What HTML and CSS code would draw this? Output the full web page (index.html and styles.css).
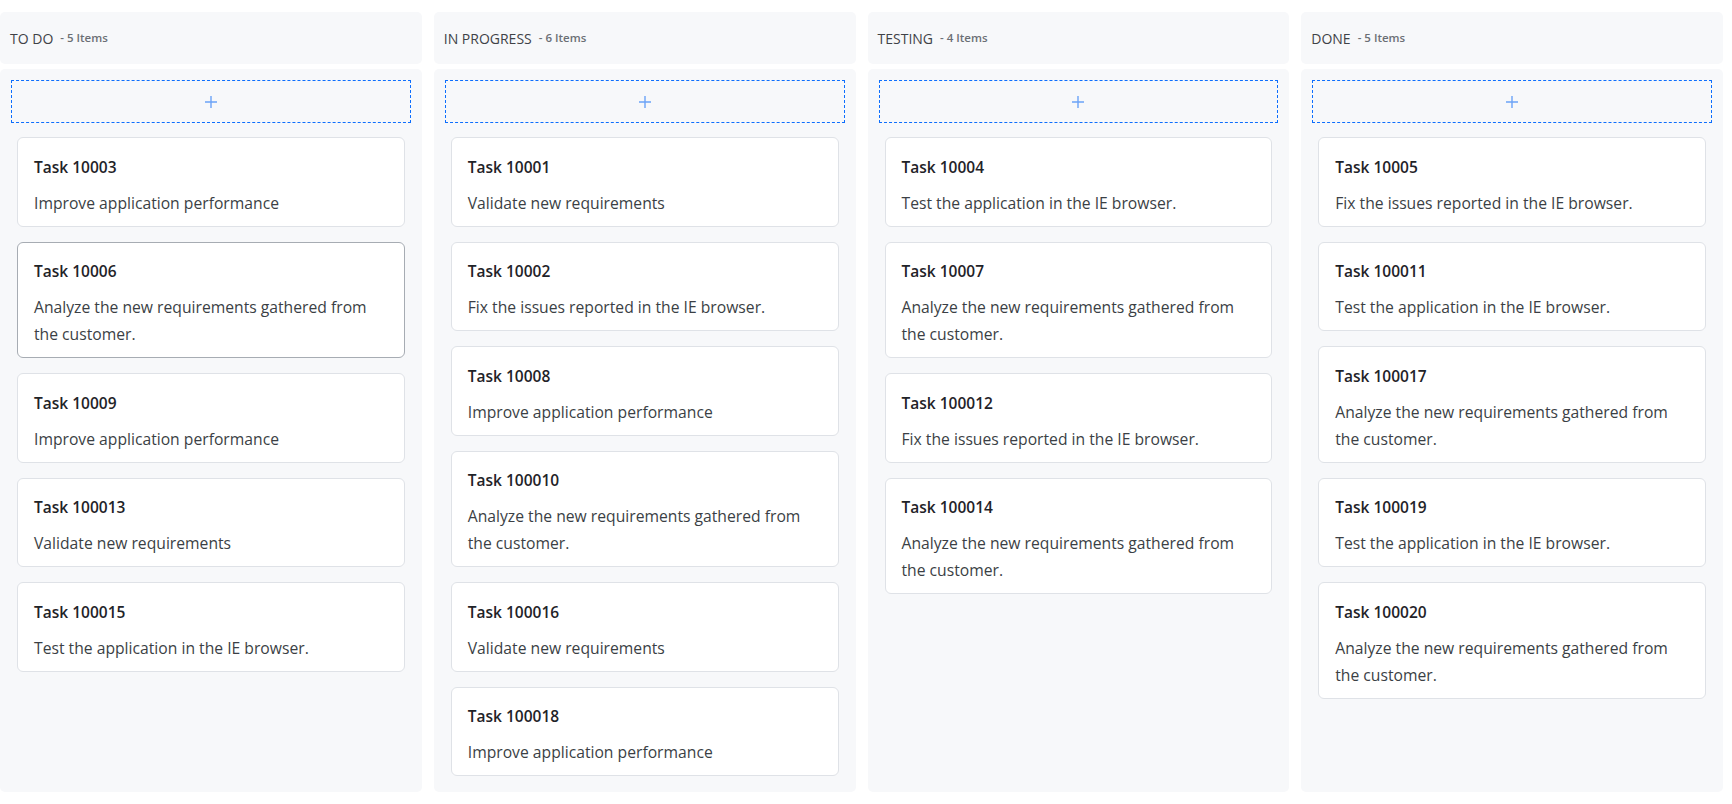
FILE: index.html
```html
<!DOCTYPE html>
<html lang="en">
<head>
<meta charset="utf-8">
<title>Kanban Board</title>
<link rel="stylesheet" href="styles.css">
</head>
<body>
<div class="board">
  <section class="column">
    <header class="col-header"><span class="col-title">TO DO</span><span class="col-count">- 5 Items</span></header>
    <div class="col-content">
      <div class="add-zone"><svg class="plus" width="14" height="14" viewBox="0 0 14 14"><path d="M7 1v12M1 7h12"/></svg></div>
      <div class="cards">
        <div class="card"><div class="card-title">Task 10003</div><div class="card-desc">Improve application performance</div></div>
        <div class="card card-hover"><div class="card-title">Task 10006</div><div class="card-desc">Analyze the new requirements gathered from the customer.</div></div>
        <div class="card"><div class="card-title">Task 10009</div><div class="card-desc">Improve application performance</div></div>
        <div class="card"><div class="card-title">Task 100013</div><div class="card-desc">Validate new requirements</div></div>
        <div class="card"><div class="card-title">Task 100015</div><div class="card-desc">Test the application in the IE browser.</div></div>
      </div>
    </div>
  </section>
  <section class="column">
    <header class="col-header"><span class="col-title">IN PROGRESS</span><span class="col-count">- 6 Items</span></header>
    <div class="col-content">
      <div class="add-zone"><svg class="plus" width="14" height="14" viewBox="0 0 14 14"><path d="M7 1v12M1 7h12"/></svg></div>
      <div class="cards">
        <div class="card"><div class="card-title">Task 10001</div><div class="card-desc">Validate new requirements</div></div>
        <div class="card"><div class="card-title">Task 10002</div><div class="card-desc">Fix the issues reported in the IE browser.</div></div>
        <div class="card"><div class="card-title">Task 10008</div><div class="card-desc">Improve application performance</div></div>
        <div class="card"><div class="card-title">Task 100010</div><div class="card-desc">Analyze the new requirements gathered from the customer.</div></div>
        <div class="card"><div class="card-title">Task 100016</div><div class="card-desc">Validate new requirements</div></div>
        <div class="card"><div class="card-title">Task 100018</div><div class="card-desc">Improve application performance</div></div>
      </div>
    </div>
  </section>
  <section class="column">
    <header class="col-header"><span class="col-title">TESTING</span><span class="col-count">- 4 Items</span></header>
    <div class="col-content">
      <div class="add-zone"><svg class="plus" width="14" height="14" viewBox="0 0 14 14"><path d="M7 1v12M1 7h12"/></svg></div>
      <div class="cards">
        <div class="card"><div class="card-title">Task 10004</div><div class="card-desc">Test the application in the IE browser.</div></div>
        <div class="card"><div class="card-title">Task 10007</div><div class="card-desc">Analyze the new requirements gathered from the customer.</div></div>
        <div class="card"><div class="card-title">Task 100012</div><div class="card-desc">Fix the issues reported in the IE browser.</div></div>
        <div class="card"><div class="card-title">Task 100014</div><div class="card-desc">Analyze the new requirements gathered from the customer.</div></div>
      </div>
    </div>
  </section>
  <section class="column">
    <header class="col-header"><span class="col-title">DONE</span><span class="col-count">- 5 Items</span></header>
    <div class="col-content">
      <div class="add-zone"><svg class="plus" width="14" height="14" viewBox="0 0 14 14"><path d="M7 1v12M1 7h12"/></svg></div>
      <div class="cards">
        <div class="card"><div class="card-title">Task 10005</div><div class="card-desc">Fix the issues reported in the IE browser.</div></div>
        <div class="card"><div class="card-title">Task 100011</div><div class="card-desc">Test the application in the IE browser.</div></div>
        <div class="card"><div class="card-title">Task 100017</div><div class="card-desc">Analyze the new requirements gathered from the customer.</div></div>
        <div class="card"><div class="card-title">Task 100019</div><div class="card-desc">Test the application in the IE browser.</div></div>
        <div class="card"><div class="card-title">Task 100020</div><div class="card-desc">Analyze the new requirements gathered from the customer.</div></div>
      </div>
    </div>
  </section>
</div>
</body>
</html>
```

FILE: styles.css
```css
* { box-sizing: border-box; }

html, body {
  margin: 0;
  padding: 0;
  background: #ffffff;
}

body {
  font-family: "Open Sans", "Noto Sans", sans-serif;
  color: #343a40;
}

.board {
  display: flex;
  gap: 12px;
  width: 1723px;
  height: 804px;
  padding: 12px 0;
}

.column {
  flex: 1 1 0;
  min-width: 0;
  display: flex;
  flex-direction: column;
  gap: 5px;
}

.col-header {
  height: 52px;
  flex: none;
  display: flex;
  align-items: center;
  padding: 0 10px;
  background: #f7f8fa;
  border-radius: 5px;
}

.col-title {
  font-size: 14px;
  font-weight: 500;
  color: #3f4247;
}

.col-count {
  margin-left: 7px;
  font-size: 11.5px;
  font-weight: 600;
  color: #6b6f75;
  position: relative;
  top: -1px;
}

.col-content {
  flex: 1;
  background: #f7f8fa;
  border-radius: 5px;
  padding: 11px;
}

.add-zone {
  height: 43px;
  border: 1px dashed #0d6efd;
  display: flex;
  align-items: center;
  justify-content: center;
  margin-bottom: 14px;
}

.plus path {
  stroke: #6ba3f7;
  stroke-width: 1.4;
  fill: none;
}

.cards {
  display: flex;
  flex-direction: column;
  gap: 15px;
  padding: 0 6px;
}

.card {
  background: #ffffff;
  border: 1px solid #dfe2e7;
  border-radius: 6px;
  padding: 17.5px 16px 9px;
}

.card-hover {
  border-color: #a7acb3;
}

.card-title {
  font-size: 15.5px;
  line-height: 22px;
  font-weight: 600;
  color: #1f2328;
  margin-bottom: 12px;
}

.card-desc {
  font-size: 15.7px;
  line-height: 27px;
  color: #3b3f45;
}
```
